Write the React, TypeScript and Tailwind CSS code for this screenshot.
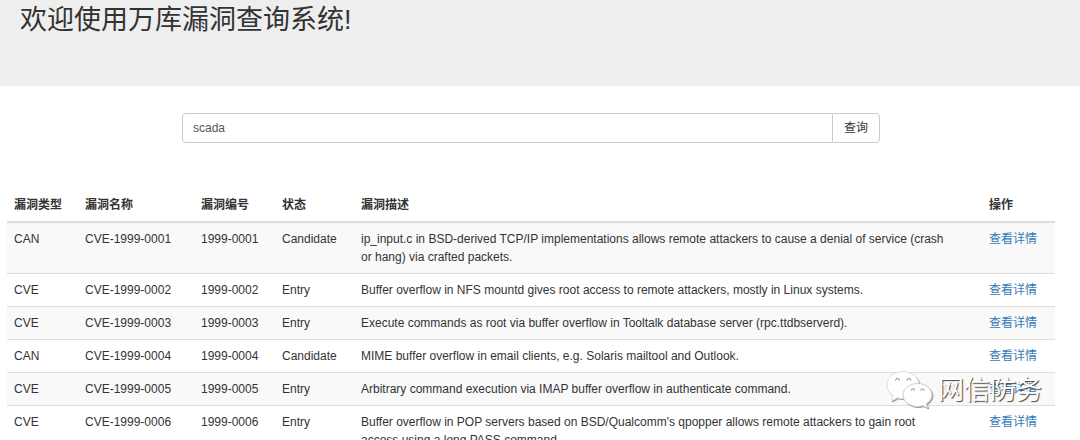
const rows = [
  { type: "CAN", id: "1999-0001", status: "Candidate", text: "ip_input.c in BSD-derived TCP/IP implementations allows remote attackers to cause a denial of service (crash or hang) via crafted packets." },
  { type: "CVE", id: "1999-0002", status: "Entry", text: "Buffer overflow in NFS mountd gives root access to remote attackers, mostly in Linux systems." },
  { type: "CVE", id: "1999-0003", status: "Entry", text: "Execute commands as root via buffer overflow in Tooltalk database server (rpc.ttdbserverd)." },
  { type: "CAN", id: "1999-0004", status: "Candidate", text: "MIME buffer overflow in email clients, e.g. Solaris mailtool and Outlook." },
  { type: "CVE", id: "1999-0005", status: "Entry", text: "Arbitrary command execution via IMAP buffer overflow in authenticate command." },
  { type: "CVE", id: "1999-0006", status: "Entry", text: "Buffer overflow in POP servers based on BSD/Qualcomm's qpopper allows remote attackers to gain root access using a long PASS command." },
];

const cell = "p-[7px] align-top";

function Watermark() {
  return (
    <div className="pointer-events-none absolute top-[370px] right-[38px] flex items-center gap-1">
      <svg viewBox="0 0 48 40" className="h-10 w-12" fill="none" aria-hidden="true">
        <g className="drop-shadow-[1px_1px_0_#999]">
          <path
            d="M17 1.500C8.200 1.500 1 7.500 1 15c0 4.300 2.300 8 6 10.500L5.500 31l6-3.200c1.800.5 3.600.7 5.500.7 8.800 0 16-6 16-13.500S25.800 1.500 17 1.500Z"
            fill="#fff" stroke="#ddd"
          />
        </g>
        <g className="drop-shadow-[1px_1px_0_#999]">
          <path
            d="M31.500 13.500C23.500 13.500 17 18.600 17 25s6.500 11.500 14.500 11.500c1.900 0 3.700-.3 5.300-.8l4.900 2.300-1.300-4.200c3.400-2.100 5.600-5.300 5.600-8.800 0-6.400-6.500-11.500-14.500-11.500Z"
            fill="#fff" stroke="#ccc"
          />
        </g>
        <path d="M9.500 10.500a2 2 0 0 1 4 0M21 10.500a2 2 0 0 1 4 0M25.300 20.500a1.700 1.700 0 0 1 3.400 0M34.800 20.500a1.700 1.700 0 0 1 3.400 0" stroke="#888" />
      </svg>
      <span className="text-[26px] leading-10 text-white [text-shadow:1px_1px_1px_#444]">网信防务</span>
    </div>
  );
}

export default function App() {
  return (
    <div className="relative h-screen overflow-hidden bg-white font-['Liberation_Sans','Noto_Sans_CJK_SC',sans-serif] text-[12px] leading-[18px] text-[#333]">
      <header className="bg-[#eee] px-5 pt-1 pb-[50px]">
        <h1 className="text-[27px] leading-8">欢迎使用万库漏洞查询系统!</h1>
      </header>

      <form className="flex pt-[27px] pr-[200px] pl-[182px]" onSubmit={(e) => e.preventDefault()}>
        <input
          type="text"
          aria-label="漏洞关键词"
          defaultValue="scada"
          className="h-[30px] min-w-0 flex-1 rounded-l-[4px] border border-[#ccc] px-[10px] text-[#555] outline-none"
        />
        <button type="submit" className="-ml-px h-[30px] w-12 rounded-r-[4px] border border-[#ccc] bg-white">
          查询
        </button>
      </form>

      <main className="pt-[46px] pr-[25px] pl-[7px]">
        <table className="w-full table-fixed border-collapse text-left">
          <colgroup>
            <col className="w-[71px]" />
            <col className="w-[116px]" />
            <col className="w-[81px]" />
            <col className="w-[79px]" />
            <col />
            <col className="w-[73px]" />
          </colgroup>
          <thead>
            <tr className="border-b-2 border-[#ddd]">
              {["漏洞类型", "漏洞名称", "漏洞编号", "状态", "漏洞描述", "操作"].map((h) => (
                <th key={h} className={`${cell} font-bold`}>{h}</th>
              ))}
            </tr>
          </thead>
          <tbody>
            {rows.map((r) => (
              <tr key={r.id} className="border-b border-[#ddd] odd:bg-[#f9f9f9]">
                <td className={cell}>{r.type}</td>
                <td className={cell}>CVE-{r.id}</td>
                <td className={cell}>{r.id}</td>
                <td className={cell}>{r.status}</td>
                <td className="py-[7px] pr-8 pl-[7px] align-top">{r.text}</td>
                <td className={cell}>
                  <a href={`#${r.id}`} className="text-[#337ab7]">查看详情</a>
                </td>
              </tr>
            ))}
          </tbody>
        </table>
      </main>
      <Watermark />
    </div>
  );
}
